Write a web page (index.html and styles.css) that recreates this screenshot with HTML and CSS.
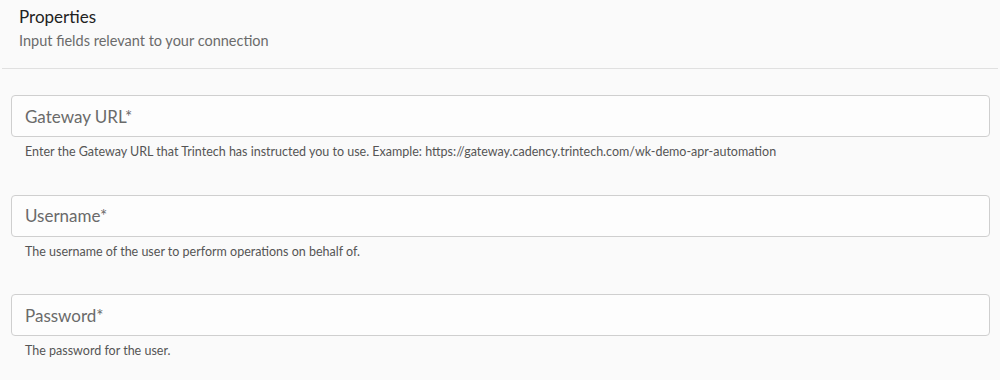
FILE: index.html
```html
<!DOCTYPE html>
<html lang="en">
<head>
    <meta charset="UTF-8">
    <title>Properties</title>
    <link rel="stylesheet" href="styles.css">
</head>
<body>
    <div class="panel">
        <div class="panel-header">
            <h2>Properties</h2>
            <p>Input fields relevant to your connection</p>
        </div>

        <div class="fields">
            <div class="field">
                <input type="text" placeholder="Gateway URL*">
                <span class="hint">Enter the Gateway URL that Trintech has instructed you to use. Example: https://gateway.cadency.trintech.com/wk-demo-apr-automation</span>
            </div>
            <div class="field">
                <input type="text" placeholder="Username*">
                <span class="hint">The username of the user to perform operations on behalf of.</span>
            </div>
            <div class="field">
                <input type="password" placeholder="Password*">
                <span class="hint">The password for the user.</span>
            </div>
        </div>
    </div>
</body>
</html>
```

FILE: styles.css
```css
* {
    box-sizing: border-box;
    margin: 0;
    padding: 0;
}

body {
    font-family: Lato, 'Open Sans', sans-serif;
    background-color: #fafafa;
    color: #222;
}

.panel {
    padding: 0 2px;
}

.panel-header {
    padding: 6px 17px 17px;
    border-bottom: 1px solid #e0e0e0;
}

.panel-header h2 {
    font-size: 17px;
    font-weight: 400;
    line-height: 22px;
    color: #222;
}

.panel-header p {
    font-size: 14.5px;
    line-height: 20px;
    margin-top: 3px;
    color: #6b6b6b;
}

.fields {
    padding: 26px 8px 0 9px;
    display: flex;
    flex-direction: column;
    gap: 33.5px;
}

.field {
    display: flex;
    flex-direction: column;
}

.field input {
    width: 100%;
    height: 42px;
    padding: 0 13px;
    border: 1px solid #cfcfcf;
    border-radius: 4px;
    background-color: #fdfdfd;
    font-family: inherit;
    font-size: 17px;
    color: #333;
}

.field input::placeholder {
    color: #6a6a6a;
}

.field input:focus {
    outline: none;
    border-color: #999;
}

.hint {
    display: block;
    padding: 6px 14px 0;
    font-size: 12.5px;
    line-height: 18px;
    color: #555;
}
```
